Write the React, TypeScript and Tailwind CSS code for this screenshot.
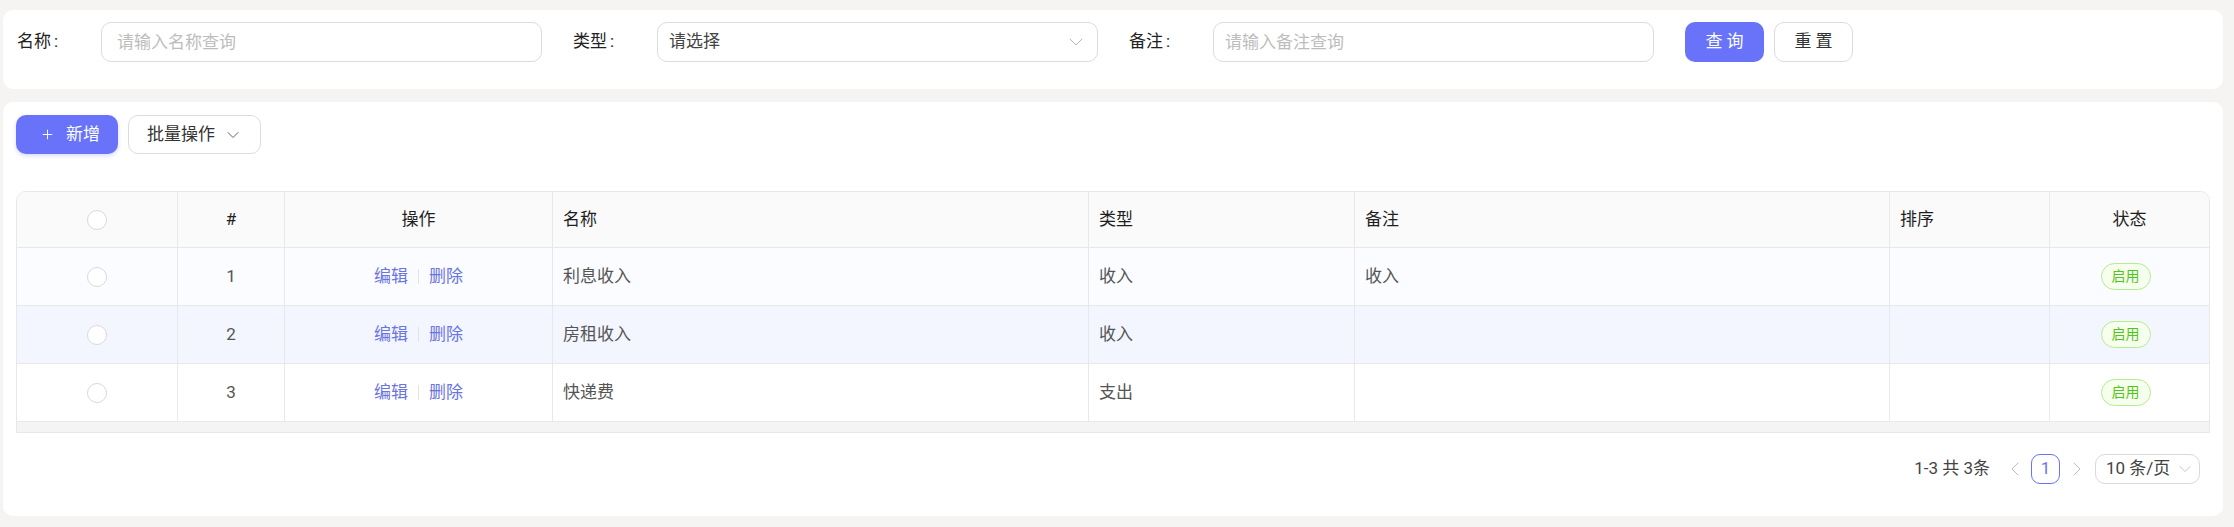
import React from 'react';
import { ChevronDown, ChevronLeft, ChevronRight, Plus } from 'lucide-react';

const FONT = { fontFamily: 'Roboto, "Noto Sans CJK SC", sans-serif' };

type Row = { id: number; name: string; type: string; remark: string; sort: string };

const rows: Row[] = [
  { id: 1, name: '利息收入', type: '收入', remark: '收入', sort: '' },
  { id: 2, name: '房租收入', type: '收入', remark: '', sort: '' },
  { id: 3, name: '快递费', type: '支出', remark: '', sort: '' },
];

const COLS = 'grid grid-cols-[161px_107px_268px_536px_266px_535px_160px_161px]';

function Radio() {
  return <span className="block w-[20px] h-[20px] rounded-full border border-[#d9d9d9] bg-white" />;
}

function FormItem({ label, children }: { label: string; children: React.ReactNode }) {
  return (
    <div className="flex items-center">
      <label className="w-[84px] shrink-0 text-[17px] text-[#222]">
        {label}
        <span className="ml-[3px]">:</span>
      </label>
      {children}
    </div>
  );
}

function rowBg(i: number): string {
  if (i === 0) return 'bg-[#fafcff]';
  if (i === 1) return 'bg-[#f3f6fe]';
  return 'bg-white';
}

export default function App() {
  return (
    <div className="min-h-[527px] w-full bg-[#f5f4f2] pt-[10px] pl-[3px] pr-[11px] pb-[13px]" style={FONT}>
      {/* Search form */}
      <div className="bg-white rounded-[10px] pl-[14px] pt-[12px] pb-[27px] flex items-center gap-x-[31px]">
        <FormItem label="名称">
          <input
            className="w-[441px] h-[40px] rounded-[10px] border border-[#dcdcdc] px-[15px] text-[17px] outline-none placeholder:text-[#bdbdbd]"
            placeholder="请输入名称查询"
          />
        </FormItem>
        <FormItem label="类型">
          <div className="w-[441px] h-[40px] rounded-[10px] border border-[#dcdcdc] pl-[11px] pr-[9px] flex items-center justify-between">
            <span className="text-[17px] text-[#444]">请选择</span>
            <ChevronDown size={24} strokeWidth={1} className="text-[#b5b5b5]" />
          </div>
        </FormItem>
        <FormItem label="备注">
          <input
            className="w-[441px] h-[40px] rounded-[10px] border border-[#dcdcdc] px-[11px] text-[17px] outline-none placeholder:text-[#bdbdbd]"
            placeholder="请输入备注查询"
          />
        </FormItem>
        <div className="flex items-center gap-[10px]">
          <button className="w-[79px] h-[40px] rounded-[10px] bg-[#6873fa] text-white text-[17px] tracking-[4px] pl-[4px]">
            查询
          </button>
          <button className="w-[79px] h-[40px] rounded-[10px] border border-[#dcdcdc] bg-white text-[#333] text-[17px] tracking-[4px] pl-[4px]">
            重置
          </button>
        </div>
      </div>

      {/* Table card */}
      <div className="mt-[13px] bg-white rounded-[10px] px-[13px] pt-[13px] pb-[32px]">
        <div className="flex items-center gap-[10px]">
          <button className="h-[39px] w-[102px] rounded-[10px] bg-[#6873fa] text-white text-[17px] flex items-center pl-[24px] gap-[11px] shadow-[0_2px_4px_rgba(104,115,250,0.25)]">
            <Plus size={15} strokeWidth={1.5} />
            <span>新增</span>
          </button>
          <button className="h-[39px] w-[133px] rounded-[10px] border border-[#dcdcdc] bg-white text-[#333] text-[17px] flex items-center pl-[18px] gap-[8px]">
            <span>批量操作</span>
            <ChevronDown size={20} strokeWidth={1.2} className="text-[#666]" />
          </button>
        </div>

        <div className="mt-[37px] border border-[#e8e8e8] rounded-t-[10px] overflow-hidden">
          {/* header */}
          <div className={`${COLS} h-[56px] bg-[#fafafa] border-b border-[#e8e8e8] text-[17px] text-[#1f1f1f]`}>
            <div className="flex items-center justify-center border-r border-[#e8e8e8]"><Radio /></div>
            <div className="flex items-center justify-center border-r border-[#e8e8e8]">#</div>
            <div className="flex items-center justify-center border-r border-[#e8e8e8]">操作</div>
            <div className="flex items-center px-[10px] border-r border-[#e8e8e8]">名称</div>
            <div className="flex items-center px-[10px] border-r border-[#e8e8e8]">类型</div>
            <div className="flex items-center px-[10px] border-r border-[#e8e8e8]">备注</div>
            <div className="flex items-center px-[10px] border-r border-[#e8e8e8]">排序</div>
            <div className="flex items-center justify-center pr-[2px]">状态</div>
          </div>

          {rows.map((r, i) => (
            <div key={r.id} className={`${COLS} h-[58px] border-b border-[#e8e8e8] text-[17px] text-[#555] ${rowBg(i)}`}>
              <div className="flex items-center justify-center border-r border-[#e8e8e8]"><Radio /></div>
              <div className="flex items-center justify-center border-r border-[#e8e8e8]">{r.id}</div>
              <div className="flex items-center justify-center border-r border-[#e8e8e8] text-[#6b75e2]">
                <span>编辑</span>
                <span className="mx-[10px] w-px h-[15px] bg-[#e3e3e3]" />
                <span>删除</span>
              </div>
              <div className="flex items-center px-[10px] border-r border-[#e8e8e8]">{r.name}</div>
              <div className="flex items-center px-[10px] border-r border-[#e8e8e8]">{r.type}</div>
              <div className="flex items-center px-[10px] border-r border-[#e8e8e8]">{r.remark}</div>
              <div className="flex items-center px-[10px] border-r border-[#e8e8e8]">{r.sort}</div>
              <div className="flex items-center justify-center pr-[10px]">
                <span className="w-[50px] h-[27px] rounded-full border border-[#b7eb8f] bg-[#f6ffed] text-[#52c41a] text-[14px] flex items-center justify-center">
                  启用
                </span>
              </div>
            </div>
          ))}

          {/* horizontal scroll track */}
          <div className="h-[10px] bg-[#f4f4f4]" />
        </div>

        {/* pagination */}
        <div className="mt-[21px] flex items-center justify-end pr-[10px] text-[17px] text-[#444]">
          <span className="mr-[13px]">1-3 共 3条</span>
          <ChevronLeft size={24} strokeWidth={1} className="shrink-0 text-[#bbb]" />
          <span className="shrink-0 ml-[4px] mr-[5px] w-[29px] h-[30px] rounded-[9px] border border-[#6873fa] text-[#6873fa] flex items-center justify-center">1</span>
          <ChevronRight size={24} strokeWidth={1} className="shrink-0 text-[#bbb]" />
          <div className="shrink-0 ml-[6px] w-[105px] h-[30px] rounded-[10px] border border-[#d9d9d9] flex items-center justify-between pl-[10px] pr-[4px]">
            <span>10 条/页</span>
            <ChevronDown size={20} strokeWidth={1} className="text-[#bbb]" />
          </div>
        </div>
      </div>
    </div>
  );
}
